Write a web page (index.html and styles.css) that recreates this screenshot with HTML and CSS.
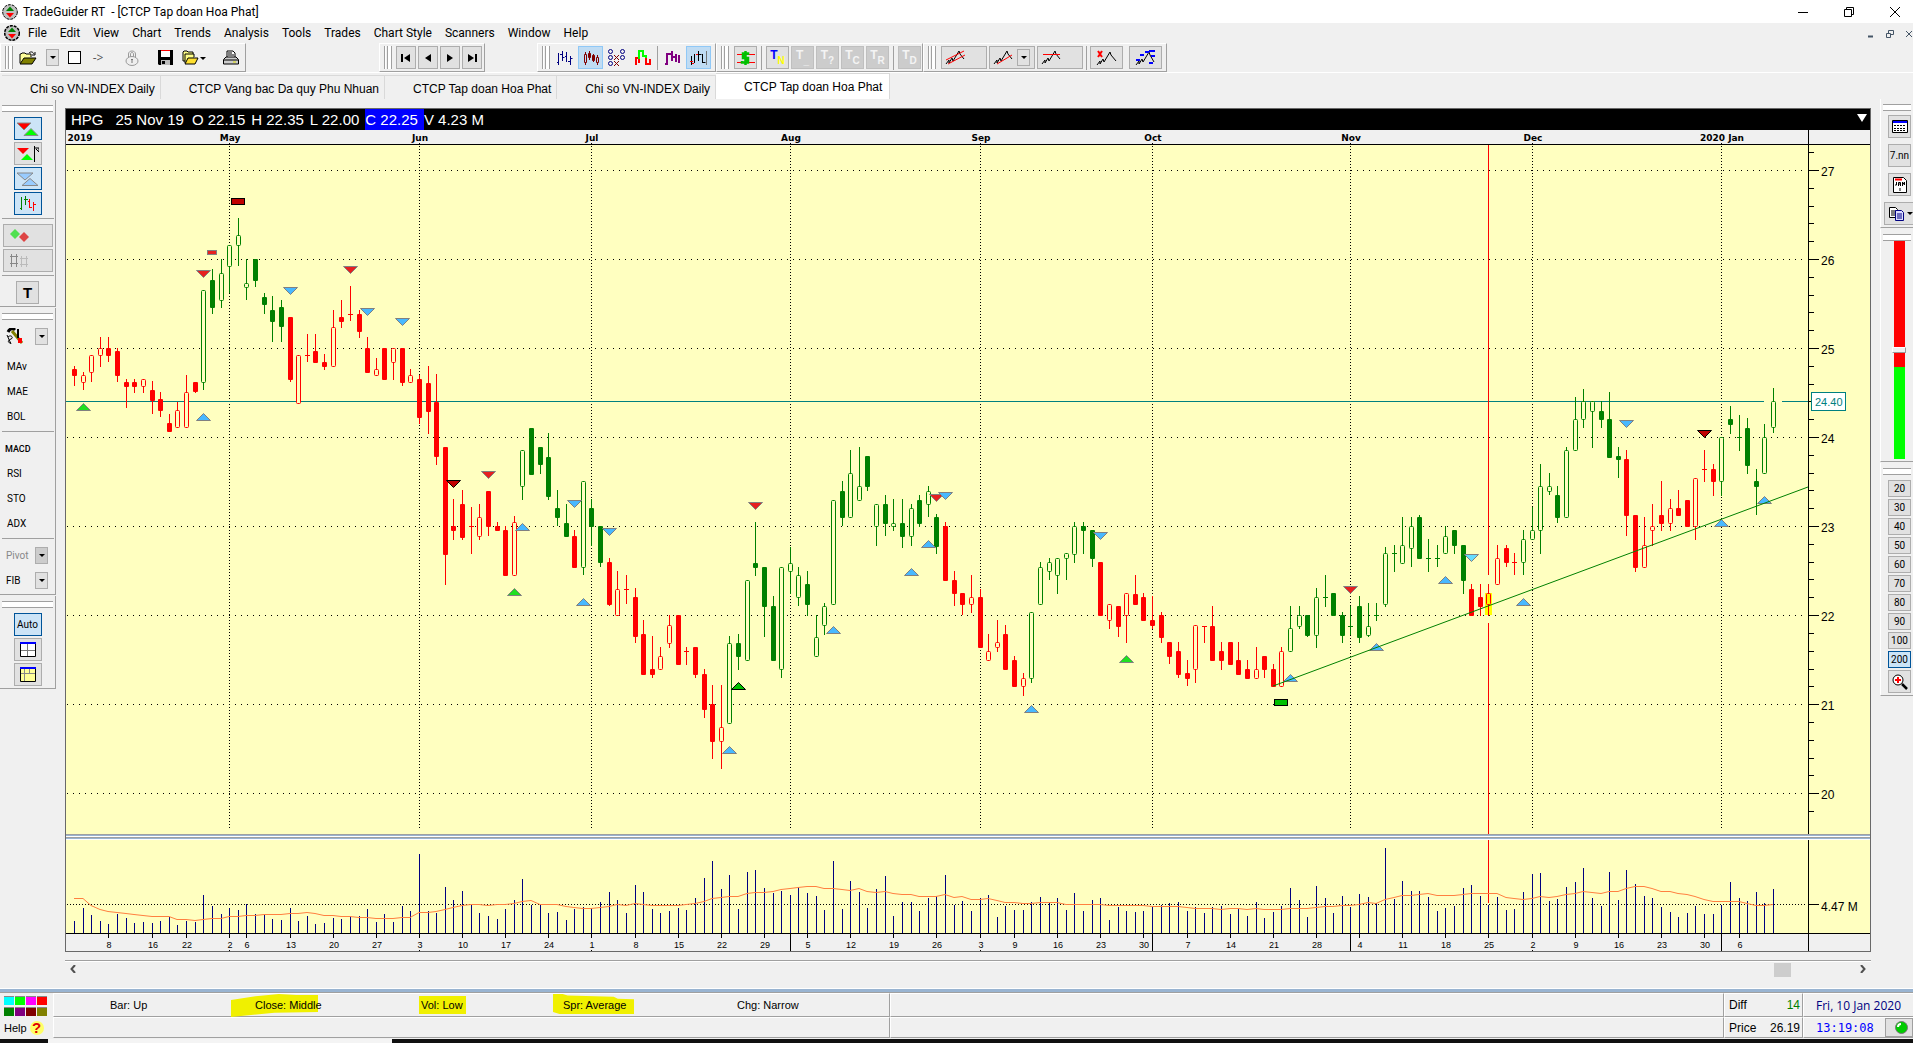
FILE: index.html
```html
<!DOCTYPE html>
<html lang="en">
<head>
  <meta charset="UTF-8" />
  <meta name="viewport" content="width=device-width, initial-scale=1.0"/>
  <title>TradeGuider RT - [CTCP Tap doan Hoa Phat]</title>
  <link rel="stylesheet" href="styles.css">
</head>
<body>
  <header class="titlebar">
    <svg class="app-icon" viewBox="0 0 16 16"><circle cx="8" cy="8" r="7.3" fill="#c0c0c0" stroke="#000" stroke-dasharray="3 1"/><path d="M8 2.5 12 7H4z" fill="#008000"/><path d="M4 9h8l-4 4.500z" fill="#f00"/></svg>
    <span class="title">TradeGuider RT&nbsp; - [CTCP Tap doan Hoa Phat]</span>
    <div class="window-buttons">
      <button aria-label="Minimize"><svg viewBox="0 0 10 10"><path d="M0 5.500h10"/></svg></button>
      <button aria-label="Restore"><svg viewBox="0 0 10 10"><path d="M.5 2.500h7v7h-7zM2.500 2.500v-2h7v7h-2"/></svg></button>
      <button aria-label="Close"><svg viewBox="0 0 10 10"><path d="M0 0l10 10M10 0L0 10"/></svg></button>
    </div>
  </header>

  <nav class="menubar">
    <svg class="app-icon" viewBox="0 0 16 16"><circle cx="8" cy="8" r="7.3" fill="#c0c0c0" stroke="#000" stroke-width="1.500" stroke-dasharray="3 1"/><path d="M8 2.500 12 7H4z" fill="#008000"/><path d="M4 9h8l-4 4.500z" fill="#f00"/></svg>
    <button>File</button>
    <button>Edit</button>
    <button>View</button>
    <button>Chart</button>
    <button>Trends</button>
    <button>Analysis</button>
    <button>Tools</button>
    <button>Trades</button>
    <button>Chart Style</button>
    <button>Scanners</button>
    <button>Window</button>
    <button>Help</button>
    <div class="mdi-buttons">
      <button aria-label="Minimize chart"><svg viewBox="0 0 8 8"><path d="M1 6.500h5" stroke-width="2"/></svg></button>
      <button aria-label="Restore chart"><svg viewBox="0 0 8 8"><path d="M.5 3.500h4v4h-4zM2.500 3.500v-3h5v4h-3"/></svg></button>
      <button aria-label="Close chart"><svg viewBox="0 0 8 8"><path d="M1 1l6 6M7 1L1 7"/></svg></button>
    </div>
  </nav>

  <div class="toolbars">
    <div class="toolbar bar-file">
      <button class="flat" aria-label="Open"><svg width="18" height="14" viewBox="0 0 18 14"><path d="M1 12V3h1l1-1h3l1 1h5v3" fill="#ff9" stroke="#000"/><path d="M1 13 5 7h12l-4 6z" fill="#808000" stroke="#000"/><path d="M10 2c2-2 4-1 5 1m1-2v3h-3" fill="none" stroke="#000"/></svg></button>
      <button class="drop" aria-label="Open list"></button>
      <button class="flat blank" aria-label="Blank page"></button>
      <button class="flat arrow">-&gt;</button>
      <button class="flat lock" aria-label="Lock"><svg width="14" height="16" viewBox="0 0 14 16" fill="none" stroke="#999"><path d="M3.500 7V4c0-4 7-4 7 0v3"/><path d="M5.500 7V4c0-2 3-2 3 0v3" /><ellipse cx="7" cy="11" rx="6" ry="4.500" fill="#eee"/><path d="M7 9v4M6 9.500h2" stroke="#777"/></svg></button>
      <button class="flat save" aria-label="Save"><svg width="15" height="15" viewBox="0 0 15 15"><path d="M0 0h15v15H1l-1-1z"/><path d="M3 0h9v7H3z" fill="#fff"/><path d="M3 0h9v1H3z" fill="#f00"/><path d="M3 10h9v5H3z" fill="#bbb"/><path d="M4 11h3v3H4z"/></svg></button>
      <button class="flat folders" aria-label="Save workspace"><svg width="24" height="16" viewBox="0 0 24 16"><path d="M1 11V2l1-1h3l1 1h5v9z" fill="#ff8" stroke="#000"/><path d="M3 13V4h9v3" fill="#ff8" stroke="#000"/><path d="m3 14 3-6h10l-3 6z" fill="#ffe030" stroke="#000"/><path d="M18 7h6l-3 3z"/></svg></button>
      <button class="flat" aria-label="Print"><svg width="16" height="16" viewBox="0 0 16 16"><path d="M4 7V1h6l2 2v4" fill="#fff" stroke="#000"/><path d="M5 3h4M5 5h6" stroke="#000"/><path d="M.5 9.500 3 7h10l2.500 2.500V14h-15z" fill="#ccc" stroke="#000"/><path d="M1 10h14" stroke="#000"/><path d="M10 12h3" stroke="#dd0"/></svg></button>
    </div>

    <div class="toolbar bar-nav">
      <button aria-label="First"><svg width="10" height="8" viewBox="0 0 10 8"><path d="M0 0h2v8H0zM9 0v8L3 4z"/></svg></button>
      <button aria-label="Previous"><svg width="10" height="8" viewBox="0 0 10 8"><path d="M8 0v8L2 4z"/></svg></button>
      <button aria-label="Next"><svg width="10" height="8" viewBox="0 0 10 8"><path d="M2 0v8l6-4z"/></svg></button>
      <button aria-label="Last"><svg width="10" height="8" viewBox="0 0 10 8"><path d="M8 0h2v8H8zM1 0v8l6-4z"/></svg></button>
    </div>

    <div class="toolbar bar-style">
      <button class="flat wide" aria-label="Bars"><svg width="16" height="14" viewBox="0 0 16 14" fill="none" stroke="#000080"><path d="M1.500 2v12M0 11.500h2M5.500 0v10M3 3.500h2M5.500 6.500h2M9.500 1v10M8 5.500h2M13.500 5v9M11 10.500h2M13.500 7.500h2"/></svg></button>
      <button class="flat wide on" aria-label="Candles"><svg width="16" height="14" viewBox="0 0 16 14" fill="none" stroke="#800000"><path d="M2.500 1v13M6.500 0v9M10.500 3v8M14.500 4v10"/><path d="M1.500 3.500h2v8h-2zM13.500 6.500h2v5h-2z" fill="#c0dcf3"/><path d="M5.500 2.500h2v4h-2zM9.500 4.500h2v5h-2z" fill="#800000"/></svg></button>
      <button class="flat wide" aria-label="Point and figure"><svg width="18" height="17" viewBox="0 0 18 17" fill="none"><g stroke="#000080"><circle cx="2.500" cy="2.500" r="2"/><circle cx="2.500" cy="8.500" r="2"/><circle cx="2.500" cy="14.500" r="2"/><circle cx="14.500" cy="2.500" r="2"/><circle cx="14.500" cy="8.500" r="2"/></g><path d="m6 6 5 5m0-5-5 5m0 1 5 5m0-5-5 5" stroke="#800000"/></svg></button>
      <button class="flat wide" aria-label="Renko"><svg width="16" height="15" viewBox="0 0 16 15" fill="none" stroke-width="2"><path d="M1 15V8h3v5" stroke="#f00"/><path d="M4 9V1h4v5h3v4" stroke="#0f0"/><path d="M11 8v6h4V9" stroke="#f00"/></svg></button>
      <span class="sep"></span>
      <button class="flat wide" aria-label="Colored bars"><svg width="15" height="14" viewBox="0 0 15 14" fill="none" stroke="#800080" stroke-width="2"><path d="M2 2v12M0 13h2M7 0v10M3 3h4M11 3v8M7 6h4M14 4v8"/></svg></button>
      <button class="flat wide on" aria-label="Trend bars"><svg width="17" height="14" viewBox="0 0 17 14" fill="none" stroke="#000"><path d="M1.500 5v9M4.500 3v9M8.500 0v10M12.500 3v9M8.500 3.500h3M12.500 11.500h3"/><path d="M0 10.500h3M2 12.500h2M6 3.500h2" stroke="#f00"/><path d="M16.500 0v14" stroke="#777"/></svg></button>
    </div>

    <div class="toolbar bar-trade">
      <button aria-label="Trade"><svg width="18" height="16" viewBox="0 0 18 16"><path d="M0 4.500h18M0 12.500h18" stroke="#f00"/><path d="M11 5V3.500H6V8h5v4.500H5V11M8.500 1v14" fill="none" stroke="#00c000" stroke-width="2.500"/></svg></button>
      <span class="sep"></span>
      <button class="tn"><b class="t-blue">T</b><b class="t-yellow">N</b></button>
      <button class="grey" disabled><b>T</b><b>_</b></button>
      <button class="grey" disabled><b>T</b><b>?</b></button>
      <button class="grey" disabled><b>T</b><b>C</b></button>
      <button class="grey" disabled><b>T</b><b>R</b></button>
      <span class="sep"></span>
      <button class="grey" disabled><b>T</b><b>D</b></button>
    </div>

    <div class="toolbar bar-trend">
      <button class="long" aria-label="Trend channel"><svg width="22" height="15" viewBox="0 0 22 15" fill="none"><path d="m1 14 3-4v3l3-5 1 3 6-10 1 3 4 5" stroke="#000"/><path d="M1 10 19 1M3 14l17-9" stroke="#f00"/></svg></button>
      <button class="long split" aria-label="Trend line"><svg width="22" height="15" viewBox="0 0 22 15" fill="none"><path d="m1 14 3-4v3l3-5 1 3 6-10 1 3 4 5" stroke="#000"/><path d="m4 14 15-9" stroke="#f00"/></svg><i class="drop"></i></button>
      <button class="long" aria-label="Level line"><svg width="22" height="15" viewBox="0 0 22 15" fill="none"><path d="m1 14 3-4v3l3-5 1 3 6-10 1 3 4 5" stroke="#000"/><path d="M2 4.500h17" stroke="#f00"/></svg></button>
      <span class="sep"></span>
      <button class="mid" aria-label="Delete trends"><svg width="22" height="16" viewBox="0 0 22 16" fill="none"><path d="m1 15 3-4v3l3-5 1 3 6-10 1 3 5 6" stroke="#000"/><path d="m2 1 4 6m0-6L2 7" stroke="#f00" stroke-width="2"/></svg></button>
      <button class="mid" aria-label="Trend clusters"><svg width="22" height="16" viewBox="0 0 22 16" fill="none"><path d="m1 15 3-4v3l3-5 1 3 6-10 1 3 4 7" stroke="#000"/><path d="M10 2h4M14 1h6M5 5h4M16 6h4M1 10h4M14 13h4" stroke="#00f" stroke-width="2"/></svg></button>
    </div>
  </div>

  <div class="tabs">
    <button>Chi so VN-INDEX Daily</button>
    <button>CTCP Vang bac Da quy Phu Nhuan</button>
    <button>CTCP Tap doan Hoa Phat</button>
    <button>Chi so VN-INDEX Daily</button>
    <button class="active">CTCP Tap doan Hoa Phat</button>
  </div>

  <main class="workspace">
    <aside class="left-tools">
      <section class="panel">
        <button class="tool on" aria-label="Signals"><svg width="22" height="14" viewBox="0 0 22 14"><path d="M0 1h14L7 8z" fill="#f00" stroke="#888"/><path d="M7 13.500h14l-7-7z" fill="#0f0" stroke="#888"/></svg></button>
        <button class="tool" aria-label="Signals at bar"><svg width="22" height="16" viewBox="0 0 22 16"><path d="M0 2h12L6 8z" fill="#f00"/><path d="M4 14h12l-6-6z" fill="#0f0"/><path d="M17.500 0v16M18 2h4v4l-3-3" fill="none" stroke="#000"/></svg></button>
        <button class="tool on" aria-label="Minor signals"><svg width="22" height="14" viewBox="0 0 22 14"><path d="M0 1h16l-8 7z" fill="#9cf" stroke="#888"/><path d="M5 13.500h16l-8-7z" fill="#9cf" stroke="#888"/></svg></button>
        <button class="tool on" aria-label="Bar colors"><svg width="16" height="15" viewBox="0 0 16 15" fill="none"><path d="M1.500 1v13M0 12.500h2M5.500 0v9M4 3.500h4" stroke="#008000"/><path d="M9.500 3v9M8 5.500h2m0 6h2M13.500 6v9M14 8.500h2" stroke="#f00"/></svg></button>
        <hr>
        <button class="tool full" aria-label="Clusters"><svg width="20" height="13" viewBox="0 0 20 13"><path d="m5 0 5 5-5 5-5-5z" fill="#4fe04f"/><path d="m14 3 5 5-5 5-5-5z" fill="#d44"/></svg></button>
        <button class="tool full" aria-label="Ladders"><svg width="18" height="13" viewBox="0 0 18 13" fill="none"><path d="M1.500 0v13M6.500 0v13M0 2.500h8M0 9.500h8" stroke="#888"/><path d="M11.500 2v11M16.500 2v11M10 4.500h8M10 10.500h8" stroke="#bbb"/></svg></button>
        <hr>
        <button class="tool text-tool">T</button>
      </section>

      <section class="panel">
        <div class="line tools-line">
          <svg width="18" height="17" viewBox="0 0 18 17" fill="none"><path d="M2 4c2-4 5-4 7-2" stroke="#000" stroke-width="3"/><path d="m6 3 10 12" stroke="#808000" stroke-width="3"/><path d="M12 1v9" stroke="#000" stroke-width="2"/><path d="M12 10h4v5h-4z" fill="#f00"/><path d="M2 9c3-3 6 1 3 2s-4 4 0 4M1 7l4 9" stroke="#000"/></svg>
          <button class="drop" aria-label="Indicator list"></button>
        </div>
        <button class="word">MAv</button>
        <button class="word">MAE</button>
        <button class="word">BOL</button>
        <hr>
        <button class="word small">MACD</button>
        <button class="word">RSI</button>
        <button class="word">STO</button>
        <button class="word">ADX</button>
        <hr>
        <div class="line"><button class="word dim" disabled>Pivot</button><button class="drop dim" aria-label="Pivot list"></button></div>
        <div class="line"><button class="word">FIB</button><button class="drop" aria-label="FIB list"></button></div>
      </section>

      <section class="panel">
        <button class="tool on">Auto</button>
        <button class="tool" aria-label="Tile windows"><svg width="16" height="15" viewBox="0 0 16 15" fill="#fff" stroke="#000"><path d="M.5.5h15v14H.5z"/><path d="M0 1h16" stroke="#00f" stroke-width="2"/><path d="M7.500 2v12M1 8.500h14" stroke="#777"/></svg></button>
        <button class="tool" aria-label="Cascade windows"><svg width="16" height="15" viewBox="0 0 16 15" fill="#ff9" stroke="#000"><path d="M.5.5h15v14H.5z"/><path d="M0 1h16" stroke="#00f" stroke-width="2"/><path d="M4.500 2v12M1 6.500h14M9.500 2v4" stroke="#888"/></svg></button>
      </section>
    </aside>

    <div class="chart-column">
      <div class="chart-frame">
        <div class="info">
          <span class="symbol">HPG</span>
          <span class="day">25 Nov 19</span>
          <span>O 22.15</span>
          <span>H 22.35</span>
          <span>L 22.00</span>
          <span class="close-value">C 22.25</span>
          <span>V 4.23 M</span>
          <button aria-label="Chart options"></button>
        </div>
        <svg id="price" class="price"></svg>
        <div class="splitter"></div>
        <svg id="volume" class="volume"></svg>
      </div>
      <div class="scrollbar">
        <button aria-label="Scroll left"><svg width="6" height="8" viewBox="0 0 6 8"><path d="M5 0 1.500 4 5 8"/></svg></button>
        <span class="thumb"></span>
        <button aria-label="Scroll right"><svg width="6" height="8" viewBox="0 0 6 8"><path d="m1 0 3.500 4L1 8"/></svg></button>
      </div>
    </div>

    <aside class="right-tools">
      <section class="panel tall-gap">
        <button class="tool" aria-label="Data table"><svg width="16" height="13" viewBox="0 0 16 13"><path d="M.5.5h15v12H.5z" fill="#fff" stroke="#000"/><path d="M1 1h14v2H1z" fill="#00f"/><path d="M2 5.500h12M2 8.500h12M2 10.500h12" stroke="#000" stroke-dasharray="2 1"/></svg></button>
        <button class="tool">7.nn</button>
        <button class="tool" aria-label="Calendar"><svg width="14" height="16" viewBox="0 0 14 16"><path d="M.5.5h10l3 3v12H.5z" fill="#fff" stroke="#000"/><path d="M2 2.500h7" stroke="#f00" stroke-width="2"/><path d="M3.500 5v3H2M5.500 9V5.500h2V9m0-2h-2M9.500 9V5l2 3V5M7 11v3" fill="none" stroke="#000"/></svg></button>
        <button class="tool copy" aria-label="Copy"><svg width="24" height="14" viewBox="0 0 24 14"><path d="M.5.5h6l2 2v8h-8z" fill="#fff" stroke="#000"/><path d="M2 4h5M2 6h5M2 8h5" stroke="#000"/><path d="M6.500 3.500h6l2 2v8h-8z" fill="#ddf" stroke="#000080"/><path d="M8 7h5M8 9h5M8 11h5" stroke="#000080"/><path d="M18 5h6l-3 3z"/></svg></button>
      </section>
      <section class="panel gauge-panel">
        <input type="range" class="gauge" min="0" max="100" value="50" aria-label="Strength">
      </section>
      <section class="panel zoom-levels">
        <button>20</button>
        <button>30</button>
        <button>40</button>
        <button>50</button>
        <button>60</button>
        <button>70</button>
        <button>80</button>
        <button>90</button>
        <button>100</button>
        <button class="on">200</button>
        <button class="magnify" aria-label="Zoom"><svg width="16" height="16" viewBox="0 0 16 16" fill="none"><circle cx="6" cy="6" r="5" fill="#fff" stroke="#000"/><path d="M3 6h6M6 3v6" stroke="#f00" stroke-width="2"/><path d="m10 10 5 5" stroke="#000" stroke-width="2.500"/></svg></button>
      </section>
    </aside>
  </main>

  <footer class="status">
    <div class="status-left">
      <div class="palette">
        <i class="aqua"></i><i class="lime"></i><i class="magenta"></i><i class="red"></i>
        <i class="green"></i><i class="purple"></i><i class="maroon"></i><i class="olive"></i>
      </div>
      <button class="help">Help <b>?</b></button>
    </div>
    <div class="status-main">
      <div class="readings">
        <span>Bar: Up</span>
        <span class="marked mark-close">Close: Middle</span>
        <span class="marked mark-vol">Vol: Low</span>
        <span class="marked mark-spr">Spr: Average</span>
        <span>Chg: Narrow</span>
      </div>
      <div class="message"></div>
    </div>
    <div class="status-fill"><div></div><div></div></div>
    <dl class="status-price">
      <div><dt>Diff</dt><dd class="up">14</dd></div>
      <div><dt>Price</dt><dd>26.19</dd></div>
    </dl>
    <div class="status-clock">
      <div class="date">Fri, 10 Jan 2020</div>
      <div class="time">13:19:08 <button aria-label="Connection"><svg width="13" height="13" viewBox="0 0 13 13"><circle cx="6.500" cy="6.500" r="6" fill="#0c0" stroke="#777"/><path d="M3 6c0-2 1-3 3-3" stroke="#fff" stroke-width="2" fill="none"/></svg></button></div>
    </div>
  </footer>
  <div class="taskbar"><i></i></div>

  <script src="script.js"></script>
</body>
</html>
```

FILE: styles.css
```css
* {
  box-sizing: border-box;
}

body {
  margin: 0;
  height: 100vh;
  display: flex;
  flex-direction: column;
  overflow: hidden;
  background: #f0f0f0;
  color: #000;
  font-family: 'Open Sans', 'Noto Sans', sans-serif;
  font-size: 12px;
}

button {
  margin: 0;
  padding: 0;
  border: 0;
  background: none;
  color: inherit;
  font: inherit;
  flex: none;
}

svg {
  display: block;
  flex: none;
}

/* title and menu */

.titlebar {
  height: 23px;
  flex: none;
  display: flex;
  align-items: center;
  background: #fff;
}

.app-icon {
  width: 16px;
  height: 16px;
  margin: 0 5px 0 2px;
}

.title, .menubar > button {
  font-family: Roboto, sans-serif;
  white-space: pre;
}

.window-buttons {
  margin-left: auto;
  margin-right: -5px;
  display: flex;
}

.window-buttons button {
  width: 46px;
  height: 20px;
  display: grid;
  place-items: center;
}

.window-buttons svg {
  width: 10px;
  height: 10px;
  fill: none;
  stroke: #000;
}

.menubar {
  height: 20px;
  flex: none;
  display: flex;
  align-items: center;
}

.menubar .app-icon {
  margin: 0 8px 0 4px;
}

.menubar > button {
  padding-right: 13px;
  line-height: 18px;
}

.mdi-buttons {
  margin-left: auto;
  display: flex;
  gap: 11px;
  padding-top: 2px;
}

.mdi-buttons svg {
  width: 8px;
  height: 8px;
  fill: none;
  stroke: #456;
}

/* toolbars */

.toolbars {
  height: 30px;
  flex: none;
  display: flex;
  border-bottom: 1px solid #fff;
}

.toolbar {
  height: 29px;
  display: flex;
  align-items: center;
  gap: 2px;
  padding-left: 16px;
  position: relative;
  border: 1px solid #a0a0a0;
  border-top-color: #fff;
  border-left-color: #fff;
}

.toolbar::before {
  content: "";
  position: absolute;
  left: 4px;
  top: 2px;
  width: 6px;
  height: 23px;
  border: solid #a0a0a0;
  border-width: 0 1px;
  background: linear-gradient(90deg, #fff 1px, #f0f0f0 1px, #f0f0f0 2px, #a0a0a0 2px, #a0a0a0 3px, #fff 3px);
}

.toolbar button {
  height: 23px;
  display: flex;
  align-items: center;
  justify-content: center;
  border: 1px solid #adadad;
  background: #e1e1e1;
}

.toolbar button.flat {
  border: 0;
  background: none;
}

.toolbar button.on {
  border: 1px solid #90c8f6;
  background: #c0dcf3;
}

.sep {
  width: 1px;
  height: 24px;
  margin: 0 1px;
  background: #a0a0a0;
}

.drop {
  width: 13px;
  height: 17px;
  flex: none;
  border: 1px solid #adadad;
  background: #e1e1e1;
  display: grid;
  place-items: center;
}

.drop::after {
  content: "";
  border: 3px solid transparent;
  border-top-color: #000;
  border-bottom: 0;
}

.drop.dim {
  background: #ccc;
}

.toolbar button.drop {
  height: 17px;
}

.bar-file {
  width: 246px;
  gap: 9px;
  padding-left: 18px;
}

.toolbar button.blank {
  width: 13px;
  height: 13px;
  border: 1px solid #000;
  background: #fff;
}

.bar-file .arrow {
  width: 16px;
  color: #555;
}

.bar-file .lock {
  margin: 0 10px;
}

.bar-file .folders {
  margin-right: 8px;
}

.bar-nav {
  width: 106px;
  margin-left: 133px;
}

.bar-nav button {
  width: 20px;
}

.bar-style {
  width: 179px;
  margin-left: 52px;
  padding-left: 14px;
  gap: 1px;
}

.bar-style .wide {
  width: 25px;
}

.bar-trade {
  width: 207px;
  padding-left: 17px;
}

.bar-trade button {
  width: 23px;
}

.bar-trade .sep {
  margin: 0 2px;
}

.tn b, .grey b {
  font: bold 12px 'Liberation Sans', sans-serif;
}

.tn b:first-child, .grey b:first-child {
  padding-bottom: 6px;
}

.tn b:last-child, .grey b:last-child {
  padding-top: 6px;
  font-size: 10px;
}

.t-blue {
  color: #00f;
}

.t-yellow {
  color: #ff0;
}

.toolbar .grey {
  border-color: #bfbfbf;
  background: #ccc;
  color: #f4f4f4;
}

.bar-trend {
  width: 244px;
  padding-left: 17px;
}

.bar-trend .long {
  width: 46px;
  justify-content: flex-start;
  padding-left: 3px;
}

.bar-trend .split {
  gap: 2px;
}

.bar-trend .mid {
  width: 33px;
  margin-right: 4px;
}

/* document tabs */

.tabs {
  height: 26px;
  flex: none;
  display: flex;
  align-items: flex-end;
  padding-left: 2px;
  font: 12px 'Liberation Sans', Arial, sans-serif;
}

.tabs button {
  height: 24px;
  padding: 3px 5px 0 28px;
  border: solid #d9d9d9;
  border-width: 1px 1px 0 0;
  white-space: pre;
}

.tabs .active {
  height: 26px;
  padding: 1px 7px 0 28px;
  background: #fff;
}

/* side panels */

.workspace {
  flex: 1;
  min-height: 0;
  display: flex;
}

.left-tools {
  width: 56px;
  flex: none;
  padding-top: 1px;
}

.panel {
  display: flex;
  flex-direction: column;
  align-items: center;
  gap: 2px;
  padding: 17px 0 2px;
  margin-bottom: 1px;
  position: relative;
  border: solid #a0a0a0;
  border-width: 0 1px 1px 0;
}

.panel::before {
  content: "";
  position: absolute;
  left: 2px;
  right: 2px;
  top: 5px;
  height: 5px;
  border: solid #a0a0a0;
  border-width: 1px 0;
  background: #fff;
}

.panel hr {
  width: 52px;
  height: 1px;
  margin: 1px 0 3px;
  border: 0;
  background: #a0a0a0;
}

.tool {
  width: 28px;
  height: 23px;
  display: grid;
  place-items: center;
  border: 1px solid #adadad;
  background: #e1e1e1;
  font: 10px Roboto, sans-serif;
}

.tool.on, .zoom-levels .on {
  border-color: #005499;
  background: #cce4f7;
}

.tool.full {
  width: 50px;
  justify-content: start;
  padding-left: 6px;
}

.text-tool {
  width: 23px;
  font: bold 15px 'Liberation Sans', sans-serif;
}

.line {
  width: 100%;
  height: 23px;
  display: flex;
  align-items: center;
  justify-content: space-between;
  padding: 0 7px 0 6px;
}

.tools-line {
  margin-bottom: 5px;
}

.word {
  width: 100%;
  height: 23px;
  padding-left: 7px;
  text-align: left;
  font: 10px Roboto, sans-serif;
}

.line .word {
  width: auto;
  padding-left: 0;
}

.word.small {
  padding-left: 5px;
  font-size: 9px;
  font-weight: 500;
}

.word.dim {
  color: #888;
}

.right-tools {
  width: 33px;
  flex: none;
}

.right-tools .panel {
  padding-left: 7px;
  align-items: flex-start;
  border-left: 1px solid #fff;
  border-right: 0;
}

.right-tools .tool {
  width: 23px;
}

.right-tools .tall-gap {
  gap: 6px;
  padding-top: 16px;
}

.right-tools .copy {
  width: 34px;
  margin-left: -4px;
}

.right-tools .gauge-panel {
  padding: 12px 0 2px 11px;
}

.gauge {
  width: 14px;
  height: 218px;
  margin: 0;
  appearance: none;
  writing-mode: vertical-lr;
  background: linear-gradient(#f00 58%, #0f0 58%) center / 11px 100% no-repeat;
}

.gauge::-webkit-slider-thumb {
  appearance: none;
  width: 14px;
  height: 6px;
  background: #f0f0f0;
  border: 1px solid #999;
  border-top-color: #fff;
  border-left-color: #fff;
}

.zoom-levels button {
  width: 23px;
  height: 17px;
  border: 1px solid #adadad;
  background: #e1e1e1;
  font: 10px Roboto, sans-serif;
}

.zoom-levels button.magnify {
  height: 23px;
  display: grid;
  place-items: center;
}

/* chart */

.chart-column {
  flex: 1;
  min-width: 0;
  display: flex;
  flex-direction: column;
  padding: 9px 9px 11px 9px;
}

.chart-frame {
  flex: 1;
  min-height: 0;
  display: flex;
  flex-direction: column;
  border: 1px solid #696969;
}

.info {
  height: 21px;
  flex: none;
  display: flex;
  align-items: center;
  gap: 6px;
  padding-left: 5px;
  background: #000;
  color: #fff;
  font: 15px 'Liberation Sans', Arial, sans-serif;
}

.info .symbol {
  margin-right: 6px;
}

.info .day {
  margin-right: 2px;
}

.info .close-value {
  padding-right: 6px;
  margin-right: -6px;
  line-height: 21px;
  background: #00f;
}

.info button {
  margin: 0 3px 4px auto;
  border: 5px solid transparent;
  border-top: 8px solid #fff;
  border-bottom: 0;
}

.price {
  width: 100%;
  flex: 1;
  min-height: 0;
}

.splitter {
  height: 6px;
  flex: none;
  background: linear-gradient(#a0a0a0 1px, #99b4d1 1px, #99b4d1 2px, #fff 2px, #fff 3px, #a0a0a0 3px, #a0a0a0 4px, #99b4d1 4px, #99b4d1 5px, #fff 5px);
}

.volume {
  width: 100%;
  height: 111px;
}

.price text, .volume text {
  font-family: 'Liberation Sans', Arial, sans-serif;
}

.price .months text {
  font: bold 9px 'DejaVu Sans', sans-serif;
  text-anchor: middle;
}

.days text {
  font-size: 9px;
  text-anchor: middle;
}

.scale text {
  font-size: 12px;
}

.last-price text {
  font-size: 11px;
  fill: #008080;
}

.scrollbar {
  height: 17px;
  margin-top: 8px;
  flex: none;
  display: flex;
  align-items: center;
  justify-content: space-between;
  padding: 0 5px;
  border-top: 1px solid #a0a0a0;
  box-shadow: inset 0 1px #fff;
}

.scrollbar svg {
  fill: none;
  stroke: #505050;
  stroke-width: 2;
}

.scrollbar .thumb {
  width: 17px;
  height: 14px;
  margin: 2px 69px 0 auto;
  background: #cdcdcd;
}

/* status bar */

.status {
  height: 51px;
  flex: none;
  display: flex;
  border-top: 1px solid #fff;
  box-shadow: inset 0 3px #99b4d1, inset 0 4px #a0a0a0;
  padding-top: 4px;
  font: 11px 'Liberation Sans', Arial, sans-serif;
}

.status-left {
  width: 53px;
  padding: 3px 4px 0;
}

.palette {
  width: 44px;
  display: grid;
  grid-template-columns: repeat(4, 10px);
  gap: 2px 1px;
}

.palette i {
  height: 9px;
  border-top: 1px solid #888;
}

.aqua { background: #0ff; }
.lime { background: #0f0; }
.magenta { background: #f0f; }
.red { background: #f00; }
.green { background: #008000; }
.purple { background: #800080; }
.maroon { background: #800000; }
.olive { background: #808000; }

.help {
  display: flex;
  align-items: center;
  gap: 3px;
  margin-top: 5px;
}

.help b {
  width: 14px;
  height: 14px;
  border-radius: 7px;
  background: #ff6;
  color: #e00000;
  font-size: 15px;
  line-height: 14px;
}

.status-main {
  width: 837px;
  display: grid;
  grid-template-rows: 24px 21px;
}

.status-main > div, .status-fill > div, .status-price > div, .status-clock > div {
  border: 1px solid #a0a0a0;
  border-top-color: #fff;
  border-left-color: #fff;
}

.readings {
  display: flex;
  align-items: center;
  padding-left: 56px;
}

.readings span {
  position: relative;
  z-index: 0;
  line-height: 18px;
}

.readings span:nth-child(1) { width: 145px; }
.readings span:nth-child(2) { width: 166px; }
.readings span:nth-child(3) { width: 142px; }
.readings span:nth-child(4) { width: 174px; }

.marked::before {
  content: "";
  position: absolute;
  z-index: -1;
  top: 0;
  height: 18px;
  background: #f0f000;
}

.mark-close::before {
  left: -24px;
  width: 87px;
  top: -2px;
  height: 23px;
  clip-path: polygon(0 26%, 28% 10%, 55% 0, 75% 4%, 100% 4%, 100% 78%, 50% 82%, 0 100%);
}

.mark-vol::before {
  left: -2px;
  width: 47px;
}

.mark-spr::before {
  left: -10px;
  width: 81px;
  top: -2px;
  height: 20px;
  clip-path: polygon(0 0, 12% 0, 18% 8%, 75% 14%, 80% 24%, 100% 26%, 100% 100%, 8% 100%, 0 90%);
}

.status-fill, .status-clock {
  display: grid;
  grid-template-rows: 24px 21px;
}

.status-fill {
  flex: 1;
}

.status-price {
  width: 79px;
  margin: 0;
  display: grid;
  grid-template-rows: 24px 21px;
  font-size: 12px;
}

.status-price > div {
  display: flex;
  align-items: center;
  justify-content: space-between;
  padding: 0 2px 0 4px;
}

.status-price dd {
  margin: 0;
}

.up {
  color: #008000;
}

.status-clock {
  width: 110px;
  color: #000080;
}

.status-clock > div {
  display: flex;
  align-items: center;
  padding-left: 12px;
  border-right: 0;
}

.status-clock .date {
  font: 12px 'Open Sans', sans-serif;
}

.status-clock .time {
  justify-content: space-between;
  color: #00f;
  font: 12px 'DejaVu Sans Mono', monospace;
}

.status-clock button {
  width: 28px;
  height: 19px;
  padding-left: 9px;
  border: 1px solid #a0a0a0;
  background: #e1e1e1;
}

.taskbar {
  height: 4px;
  flex: none;
  padding-left: 48px;
  background: #101010;
}

.taskbar i {
  display: block;
  width: 344px;
  height: 4px;
  background: #f4f4f4;
}
```

FILE: script.js
```js
// open, high, low, close
const bars = [
  [24.76,24.80,24.58,24.70],[24.62,24.73,24.54,24.70],[24.73,24.92,24.63,24.92],[24.92,25.12,24.80,25.00],[25.00,25.12,24.85,24.92],
  [24.97,25.00,24.63,24.70],[24.62,24.65,24.34,24.57],[24.62,24.65,24.51,24.57],[24.57,24.65,24.51,24.65],[24.53,24.63,24.27,24.42],
  [24.43,24.51,24.24,24.30],[24.16,24.26,24.07,24.07],[24.11,24.39,24.11,24.30],[24.11,24.70,24.11,24.51],[24.62,24.62,24.51,24.52],
  [24.62,25.65,24.54,25.65],[25.76,25.89,25.39,25.46],[25.54,26.00,25.46,25.84],[25.92,26.16,25.63,26.16],[26.16,26.46,25.93,26.27],
  [25.69,26.00,25.55,25.73],[26.00,26.00,25.70,25.76],[25.57,25.62,25.39,25.50],[25.43,25.58,25.08,25.30],[25.46,25.54,25.08,25.25],
  [25.35,25.35,24.63,24.65],[24.38,24.92,24.38,24.92],[24.92,25.16,24.85,24.92],[24.97,25.16,24.84,24.84],[24.84,24.93,24.77,24.80],
  [24.80,25.43,24.80,25.24],[25.35,25.54,25.24,25.30],[25.38,25.70,25.31,25.38],[25.38,25.43,25.12,25.19],[25.00,25.12,24.73,24.73],
  [24.70,24.89,24.70,24.76],[25.00,25.00,24.65,24.65],[24.84,25.00,24.65,25.00],[25.00,25.00,24.58,24.62],[24.62,24.77,24.62,24.70],
  [24.65,24.70,24.16,24.23],[24.61,24.80,24.05,24.29],[24.39,24.71,23.70,23.79],[23.89,23.89,22.35,22.69],[23.00,23.30,22.86,22.96],
  [23.25,23.40,22.86,22.88],[23.00,23.21,22.70,23.00],[22.89,23.25,22.86,23.10],[23.39,23.39,22.90,23.00],[23.00,23.05,22.96,22.96],
  [22.96,23.00,22.45,22.45],[22.45,23.11,22.45,23.05],[23.45,23.85,23.30,23.85],[24.10,24.10,23.59,23.59],[23.89,23.89,23.60,23.70],
  [23.78,24.05,23.30,23.34],[23.20,23.40,23.01,23.10],[23.04,23.25,22.89,22.89],[22.89,22.96,22.54,22.54],[22.54,23.51,22.46,23.51],
  [23.20,23.30,22.79,23.00],[23.00,23.00,22.55,22.60],[22.60,22.64,22.11,22.13],[22.00,22.49,22.00,22.29],[22.29,22.45,22.14,22.29],
  [22.20,22.30,21.70,21.76],[21.79,21.95,21.34,21.34],[21.39,21.76,21.30,21.34],[21.39,21.64,21.39,21.54],[21.69,22.00,21.64,21.89],
  [22.00,22.00,21.45,21.45],[21.60,21.64,21.45,21.60],[21.64,21.64,21.30,21.34],[21.34,21.40,20.85,20.94],[21.00,21.21,20.39,20.59],
  [20.59,21.21,20.28,20.74],[20.79,21.76,20.79,21.69],[21.69,21.79,21.40,21.54],[21.49,22.39,21.49,22.39],[22.59,23.05,22.45,22.54],
  [22.54,22.54,21.76,22.10],[22.10,22.21,21.49,21.49],[21.39,22.54,21.30,22.54],[22.49,22.76,22.25,22.59],[22.20,22.54,22.11,22.45],
  [22.35,22.50,22.00,22.13],[21.54,22.00,21.54,21.75],[21.89,22.14,21.79,22.10],[22.13,23.29,22.13,23.29],[23.39,23.51,23.01,23.10],
  [23.10,23.86,23.10,23.60],[23.29,23.89,23.29,23.45],[23.79,23.79,23.40,23.45],[23.00,23.25,22.79,23.25],[23.25,23.35,22.90,23.04],
  [23.00,23.30,22.96,23.04],[23.04,23.30,22.76,22.89],[22.89,23.25,22.79,23.20],[23.29,23.35,23.00,23.04],[23.25,23.45,23.11,23.39],
  [23.10,23.14,22.70,22.78],[23.00,23.05,22.39,22.39],[22.39,22.49,22.11,22.25],[22.25,22.25,22.01,22.13],[22.13,22.45,22.04,22.20],
  [22.20,22.29,21.64,21.64],[21.49,21.79,21.49,21.60],[21.64,21.95,21.60,21.70],[21.79,21.89,21.39,21.39],[21.50,21.54,21.20,21.20],
  [21.20,21.35,21.10,21.29],[21.29,22.03,21.25,22.03],[22.13,22.60,22.13,22.54],[22.49,22.64,22.40,22.60],[22.45,22.64,22.25,22.64],
  [22.64,22.70,22.40,22.70],[22.69,23.05,22.60,23.00],[23.00,23.05,22.70,22.96],[22.96,22.96,22.55,22.64],[22.60,22.60,22.00,22.00],
  [21.94,22.13,21.86,22.13],[22.10,22.10,21.76,21.88],[22.00,22.25,21.70,22.25],[22.24,22.45,22.13,22.13],[22.20,22.25,21.94,21.94],
  [21.94,22.21,21.86,21.89],[22.00,22.04,21.70,21.75],[21.70,21.70,21.46,21.54],[21.60,21.70,21.30,21.34],[21.35,21.50,21.21,21.29],
  [21.39,21.89,21.25,21.89],[21.88,21.88,21.70,21.88],[21.88,22.10,21.49,21.49],[21.60,21.70,21.40,21.49],[21.70,21.70,21.45,21.45],
  [21.49,21.70,21.34,21.34],[21.39,21.50,21.29,21.29],[21.29,21.64,21.29,21.39],[21.54,21.54,21.30,21.39],[21.39,21.45,21.20,21.20],
  [21.20,21.64,21.20,21.60],[21.60,22.10,21.60,21.85],[21.88,22.10,21.86,22.00],[22.00,22.00,21.76,21.78],[21.78,22.30,21.64,22.20],
  [22.20,22.45,22.10,22.20],[22.25,22.25,22.00,22.00],[22.00,22.04,21.70,21.78],[21.88,22.10,21.79,21.88],[22.10,22.21,21.70,21.75],
  [21.78,22.14,21.76,21.88],[22.00,22.14,21.95,22.00],[22.13,22.76,22.10,22.70],[22.70,22.79,22.50,22.70],[22.59,23.10,22.59,22.79],
  [22.75,23.10,22.55,23.00],[23.10,23.13,22.64,22.64],[22.64,22.86,22.50,22.64],[22.64,22.79,22.55,22.64],[22.70,23.00,22.70,22.89],
  [22.96,22.96,22.70,22.79],[22.79,22.79,22.25,22.39],[22.29,22.35,22.00,22.00],[22.20,22.35,22.00,22.10],[22.13,22.35,22.00,22.25],
  [22.35,22.79,22.35,22.64],[22.75,22.79,22.55,22.60],[22.60,22.70,22.46,22.60],[22.60,22.96,22.46,22.85],[22.85,23.21,22.85,22.96],
  [22.96,23.70,22.70,23.45],[23.39,23.60,23.36,23.45],[23.35,23.45,23.05,23.10],[23.10,23.89,23.10,23.85],[23.85,24.45,23.85,24.20],
  [24.20,24.54,24.11,24.40],[24.29,24.40,23.89,24.40],[24.29,24.40,24.11,24.20],[24.20,24.51,23.78,23.78],[23.79,23.89,23.55,23.75],
  [23.75,23.86,22.90,23.13],[23.13,23.13,22.50,22.54],[22.54,23.10,22.54,22.79],[22.96,23.25,22.79,23.00],[23.13,23.51,22.96,23.04],
  [23.04,23.30,22.96,23.20],[23.20,23.40,23.13,23.13],[23.29,23.29,23.00,23.00],[23.00,23.54,22.86,23.54],[23.64,23.86,23.51,23.64],
  [23.64,23.70,23.35,23.51],[23.51,24.00,23.35,24.00],[24.20,24.35,24.05,24.15],[24.00,24.25,23.86,24.00],[24.10,24.21,23.60,23.69],
  [23.51,23.64,23.14,23.45],[23.60,24.15,23.60,24.00],[24.11,24.55,24.06,24.40]
];

// bars drawn green, the rest are red
const upRuns = [[15, 24], [52, 57], [59, 61], [76, 100], [111, 118], [141, 161], [168, 179], [191, 197]];

const volumes = [
  12,25,18,12,9,19,15,10,11,10,12,16,8,12,11,38,27,19,25,23,29,19,18,14,13,25,12,17,9,10,
  15,14,17,17,24,11,19,11,27,22,79,22,20,46,33,42,29,20,17,14,24,33,54,28,29,20,21,13,24,26,
  25,31,41,33,20,48,41,24,20,22,25,23,35,55,72,44,58,24,61,63,45,40,42,38,46,40,37,23,72,24,
  52,41,25,44,57,17,31,31,22,35,37,58,28,32,22,35,38,16,27,23,23,31,36,30,35,23,40,22,33,35,
  13,26,22,21,22,26,28,30,31,22,26,20,26,27,19,24,17,31,15,21,27,45,33,16,47,35,20,37,26,39,
  36,30,85,34,52,42,42,36,22,25,27,45,48,37,28,36,23,24,41,59,60,32,34,46,51,65,35,27,61,33,
  63,49,37,35,26,21,16,20,27,19,19,28,51,35,32,41,30,44
];

const average = [
  35,35,28,24,22,21,20,19,18,17,17,17,14,14,13,14,15,15,17,17,18,18,19,19,19,20,20,21,20,18,
  18,17,17,16,16,15,15,15,16,16,21,21,22,24,26,28,29,29,28,29,29,30,32,33,29,29,29,27,26,25,
  25,26,27,29,28,30,29,28,28,28,28,29,30,32,35,36,37,37,40,41,41,42,44,45,46,47,47,45,45,44,
  43,45,42,41,42,40,39,39,37,37,37,39,36,37,34,34,35,33,31,31,30,30,31,31,31,29,29,29,29,29,
  28,28,28,28,28,27,27,27,27,26,25,25,25,24,25,25,24,25,24,24,24,25,25,25,26,27,27,28,28,29,
  31,30,34,36,38,38,39,40,38,38,38,39,40,40,40,40,36,35,34,35,37,36,37,39,40,42,41,40,42,42,
  45,47,47,45,42,42,40,39,37,34,32,32,32,32,30,28,28,29
];

const months = [[18, "May"], [40, "Jun"], [60, "Jul"], [83, "Aug"], [105, "Sep"], [125, "Oct"], [148, "Nov"], [169, "Dec"], [191, "2020 Jan"]];

const days = [
  [4, 8], [9, 16], [13, 22], [18, 2], [20, 6], [25, 13], [30, 20], [35, 27], [40, 3], [45, 10], [50, 17], [55, 24],
  [60, 1], [65, 8], [70, 15], [75, 22], [80, 29], [85, 5], [90, 12], [95, 19], [100, 26], [105, 3], [109, 9],
  [114, 16], [119, 23], [124, 30], [129, 7], [134, 14], [139, 21], [144, 28], [149, 4], [154, 11], [159, 18],
  [164, 25], [169, 2], [174, 9], [179, 16], [184, 23], [189, 30], [193, 6]
];

// bar index, price at the top edge, color
const downSignals = [
  [15, 25.88, "red"], [32, 25.92, "red"], [25, 25.69, "blue"], [34, 25.45, "blue"], [38, 25.34, "blue"],
  [44, 23.52, "darkred"], [48, 23.62, "red"], [58, 23.29, "blue"], [62, 22.98, "blue"], [79, 23.27, "red"],
  [100, 23.36, "red"], [101, 23.38, "blue"], [119, 22.93, "blue"], [148, 22.33, "red"], [162, 22.69, "sky"],
  [180, 24.19, "blue"], [189, 24.08, "darkred"]
];
const upSignals = [
  [1, 24.38, "green"], [15, 24.27, "blue"], [51, 22.30, "green"], [52, 23.03, "blue"], [59, 22.19, "blue"],
  [76, 20.53, "blue"], [77, 21.25, "darkgreen"], [88, 21.88, "blue"], [97, 22.53, "blue"], [99, 22.84, "blue"],
  [111, 20.99, "blue"], [122, 21.55, "green"], [141, 21.34, "blue"], [151, 21.69, "blue"], [159, 22.44, "blue"],
  [168, 22.19, "blue"], [191, 23.08, "blue"], [196, 23.34, "blue"]
];

const colors = {
  red: ["#e62020", "#808080"], blue: ["#48b8ff", "#808080"], sky: ["#66ddff", "#808080"], green: ["#20e020", "#808080"],
  darkred: ["#c00000", "#000"], darkgreen: ["#00c000", "#000"]
};

const paper = "#ffffc0";
const axisWidth = 62;
const cursor = 164;
const last = bars.length - 1;

function hline(x1, x2, y, color, dash) {
  return `<path d="M${x1} ${y + 0.5}H${x2}" stroke="${color}" ${dash ? `stroke-dasharray="${dash}"` : ""}/>`;
}

function vline(x, y1, y2, color, dash) {
  return `<path d="M${x + 0.5} ${y1}V${y2}" stroke="${color}" ${dash ? `stroke-dasharray="${dash}"` : ""}/>`;
}

function drawPrice() {
  const svg = document.getElementById("price");
  const width = svg.clientWidth;
  const height = svg.clientHeight;
  const plot = width - axisWidth;
  const unit = (height - 15) / 7.74;
  const x = i => Math.round(8 + i * (plot - 43) / last);
  const y = p => Math.round(40 + (27 - p) * unit);
  let out = `<rect width="${width}" height="14" fill="#f0f0f0"/><rect y="14" width="${width}" height="${height - 14}" fill="${paper}"/>`;

  for (let p = 27; p >= 20; p--) {
    out += hline(1, plot - 4, y(p), "#000", "1 5");
  }
  months.forEach(m => out += vline(x(m[0]), 13, height - 4, "#000", "1 2"));
  out += hline(0, width, 14, "#000");
  out += `<g class="months"><text x="14" y="11">2019</text>`;
  months.forEach(m => {
    out += `<text x="${x(m[0]) + 1}" y="11">${m[1]}</text>`;
  });
  out += `</g>`;

  // last price
  out += hline(0, x(last) - 9, y(24.4), "#008080") + hline(x(last) + 9, plot, y(24.4), "#008080");

  // cursor
  out += vline(x(cursor), 15, y(22.45), "#f00") + vline(x(cursor), y(21.91), height, "#f00");
  out += `<rect x="${x(cursor) - 3}" y="${y(22.25)}" width="7" height="${y(22) - y(22.25)}" fill="#ff0"/>`;

  bars.forEach(([o, h, l, c], i) => {
    const color = upRuns.some(r => i >= r[0] && i <= r[1]) ? "#008000" : "#f00";
    const top = y(Math.max(o, c));
    const size = y(Math.min(o, c)) - top;
    out += vline(x(i), y(h), y(l) + 1, color);
    if (o === c) {
      out += hline(x(i) - 2, x(i) + 3, top, color);
    } else if (c < o) {
      out += `<rect x="${x(i) - 2}" y="${top}" width="5" height="${size + 1}" rx="1" fill="${color}"/>`;
    } else {
      out += `<rect x="${x(i) - 1.5}" y="${top + 0.5}" width="4" height="${size}" rx="1" fill="${i === cursor ? "#ff0" : paper}" stroke="${color}"/>`;
    }
  });

  downSignals.forEach(([i, p, name]) => {
    out += `<path d="M${x(i) - 6.5} ${y(p) + 0.5}h14l-7 7z" fill="${colors[name][0]}" stroke="${colors[name][1]}"/>`;
  });
  upSignals.forEach(([i, p, name]) => {
    out += `<path d="M${x(i) - 6.5} ${y(p) + 7.5}h14l-7 -7z" fill="${colors[name][0]}" stroke="${colors[name][1]}"/>`;
  });
  out += `<rect x="${x(19) - 6.5}" y="${y(26.69) + 0.5}" width="13" height="6" fill="#c00000" stroke="#000"/>`;
  out += `<rect x="${x(16) - 4.5}" y="${y(26.1) + 0.5}" width="9" height="4" fill="#e62020" stroke="#808080"/>`;
  out += `<rect x="${x(140) - 6.5}" y="${y(21.06) + 0.5}" width="13" height="6" fill="#00c000" stroke="#000"/>`;
  out += `<path d="M${x(139)} ${y(21.2)}L${plot} ${y(23.44)}" stroke="#008000"/>`;

  // scale
  out += `<g class="scale">` + vline(plot, 0, height, "#000");
  for (let k = 136; k > 98; k--) {
    out += hline(plot, plot + (k % 5 ? 6 : 11), y(k / 5), "#000");
    if (k % 5 === 0) {
      out += `<text x="${plot + 13}" y="${y(k / 5) + 6}">${k / 5}</text>`;
    }
  }
  out += `</g><g class="last-price"><rect x="${plot + 3.5}" y="${y(24.4) - 8.5}" width="34" height="18" fill="#fff" stroke="#008080"/>`;
  out += `<text x="${plot + 7}" y="${y(24.4) + 5}">24.40</text></g>`;
  svg.innerHTML = out;
}

function drawVolume() {
  const svg = document.getElementById("volume");
  const width = svg.clientWidth;
  const plot = width - axisWidth;
  const base = 93;
  const x = i => Math.round(8 + i * (plot - 43) / last);
  let out = `<rect width="${width}" height="${base}" fill="${paper}"/>`;

  out += hline(1, plot - 2, base - 29, "#000", "1 2");
  out += vline(x(cursor), 0, 63, "#f00");
  volumes.forEach((v, i) => out += vline(x(i), base - v, base, "#000080"));
  out += `<polyline points="${average.map((v, i) => `${x(i)},${base - v + 0.5}`).join(" ")}" fill="none" stroke="#ff8040"/>`;
  out += hline(0, width, base, "#000");
  out += `<g class="days">`;
  days.forEach(([i, label]) => {
    out += vline(x(i), base, base + 5, "#000") + `<text x="${x(i) + 1}" y="108">${label}</text>`;
  });
  out += `</g>`;
  months.forEach(([i]) => {
    out += days.some(d => d[0] === i) ? vline(x(i), 110, 111, "#000") : vline(x(i), base, 111, "#000");
  });
  out += vline(plot, 0, 111, "#000") + hline(plot, plot + 11, base - 29, "#000");
  out += `<g class="scale"><text x="${plot + 13}" y="${base - 22}">4.47 M</text></g>`;
  svg.innerHTML = out;
}

function draw() {
  drawPrice();
  drawVolume();
}

draw();
window.addEventListener("resize", draw);
```
